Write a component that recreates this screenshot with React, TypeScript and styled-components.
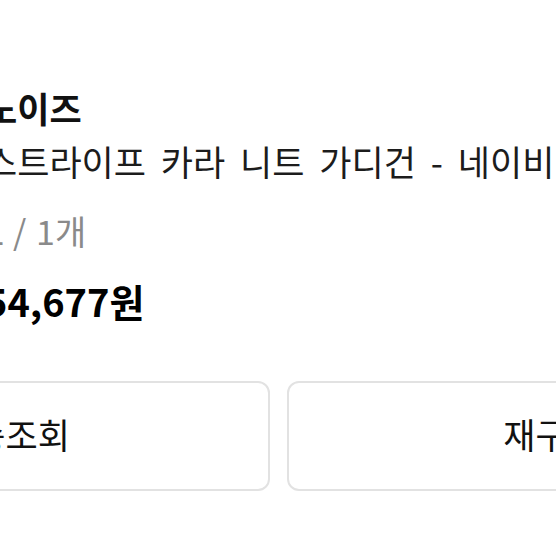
import styled, { createGlobalStyle } from "styled-components";

const GlobalStyle = createGlobalStyle`
  html, body {
    margin: 0;
    padding: 0;
    background: #ffffff;
  }
  body {
    font-family: "Noto Sans CJK KR", "Noto Sans", sans-serif;
    color: #111111;
    overflow: hidden;
  }
`;

const Viewport = styled.div`
  width: 556px;
  height: 556px;
  overflow: hidden;
`;

const Card = styled.div`
  width: 1075px;
  margin-left: -259px;
  padding-top: 84px;
  display: flex;
  flex-direction: column;
  gap: 56px;
`;

const InfoRow = styled.div`
  display: flex;
  gap: 24px;
`;

const Thumb = styled.div`
  width: 220px;
  height: 240px;
  border-radius: 8px;
  background: #f1f1f1;
  flex-shrink: 0;
`;

const Info = styled.div`
  display: flex;
  flex-direction: column;
  white-space: nowrap;
`;

const Brand = styled.div`
  font-size: 35px;
  font-weight: 700;
  line-height: 48px;
  color: #111111;
`;

const Name = styled.div`
  font-size: 35px;
  line-height: 48px;
  margin-top: 5px;
  word-spacing: 7px;
  color: #1c1c1c;
`;

const Option = styled.div`
  font-size: 34px;
  line-height: 48px;
  margin-top: 22px;
  word-spacing: 2px;
  color: #8a8a8a;
`;

const Price = styled.div`
  font-size: 38px;
  font-weight: 700;
  line-height: 48px;
  margin-top: 22px;
  color: #000000;
`;

const Buttons = styled.div`
  display: flex;
  gap: 17px;
`;

const Button = styled.button`
  flex: 1;
  height: 110px;
  border: 2px solid #e2e2e2;
  border-radius: 12px;
  background: #ffffff;
  font-family: "Noto Sans CJK KR", "Noto Sans", sans-serif;
  font-size: 35px;
  color: #111111;
  padding: 0 0 6px;
`;

export default function App() {
  return (
    <>
      <GlobalStyle />
      <Viewport>
        <Card>
          <InfoRow>
            <Thumb />
            <Info>
              <Brand>노이즈</Brand>
              <Name>스트라이프 카라 니트 가디건 - 네이비</Name>
              <Option>L / 1개</Option>
              <Price>54,677원</Price>
            </Info>
          </InfoRow>
          <Buttons>
            <Button>배송조회</Button>
            <Button>재구매</Button>
          </Buttons>
        </Card>
      </Viewport>
    </>
  );
}
